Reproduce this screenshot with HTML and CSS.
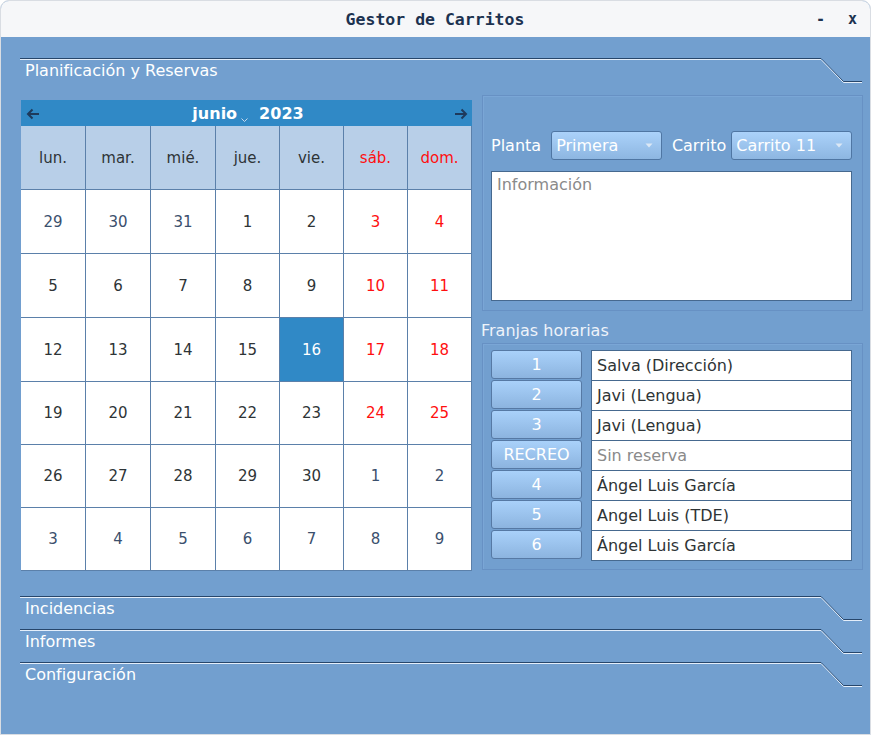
FILE: index.html
```html
<!DOCTYPE html>
<html lang="es">
<head>
<meta charset="utf-8">
<title>Gestor de Carritos</title>
<link rel="stylesheet" href="styles.css">
</head>
<body>
<div class="window">
  <div class="titlebar">
    <div class="title">Gestor de Carritos</div>
    <div class="controls"><span class="ctl">-</span><span class="ctl">x</span></div>
  </div>
  <div class="main">
    <div class="section-head first">
      <span class="head-text">Planificación y Reservas</span>
      <svg class="tail" width="42" height="26" viewBox="0 0 42 26"><path d="M0 0.5 H1 L23.5 23.5 H42" fill="none" stroke="#27466b" stroke-width="1"/><path d="M0 1.5 H1 L23.5 24.5 H42" fill="none" stroke="#e4eefa" stroke-width="1"/></svg>
    </div>

    <div class="planning">
      <div class="calendar">
        <div class="cal-head">
          <svg class="arrow" width="14" height="12" viewBox="0 0 14 12"><path d="M13 6 H2 M6.5 1.5 L2 6 L6.5 10.5" fill="none" stroke="#1e3a5c" stroke-width="2"/></svg>
          <div class="month">
            <span>junio</span>
            <svg class="mini" width="7" height="4" viewBox="0 0 7 4"><path d="M0.5 0.5 L3.5 3.5 L6.5 0.5" fill="none" stroke="#c9d9ec" stroke-width="1"/></svg>
            <span class="year">2023</span>
          </div>
          <svg class="arrow" width="14" height="12" viewBox="0 0 14 12"><path d="M1 6 H12 M7.5 1.5 L12 6 L7.5 10.5" fill="none" stroke="#1e3a5c" stroke-width="2"/></svg>
        </div>
        <div class="cal-grid">
          <div class="dn">lun.</div><div class="dn">mar.</div><div class="dn">mié.</div><div class="dn">jue.</div><div class="dn">vie.</div><div class="dn we">sáb.</div><div class="dn we">dom.</div>

          <div class="d other">29</div><div class="d other">30</div><div class="d other">31</div><div class="d">1</div><div class="d">2</div><div class="d we">3</div><div class="d we">4</div>
          <div class="d">5</div><div class="d">6</div><div class="d">7</div><div class="d">8</div><div class="d">9</div><div class="d we">10</div><div class="d we">11</div>
          <div class="d">12</div><div class="d">13</div><div class="d">14</div><div class="d">15</div><div class="d sel">16</div><div class="d we">17</div><div class="d we">18</div>
          <div class="d">19</div><div class="d">20</div><div class="d">21</div><div class="d">22</div><div class="d">23</div><div class="d we">24</div><div class="d we">25</div>
          <div class="d">26</div><div class="d">27</div><div class="d">28</div><div class="d">29</div><div class="d">30</div><div class="d other">1</div><div class="d other">2</div>
          <div class="d other">3</div><div class="d other">4</div><div class="d other">5</div><div class="d other">6</div><div class="d other">7</div><div class="d other">8</div><div class="d other">9</div>
        </div>
      </div>

      <div class="right">
        <div class="panel info-panel">
          <div class="selectors">
            <span class="lbl">Planta</span>
            <div class="combo c1"><span>Primera</span><svg width="8" height="5" viewBox="0 0 8 5"><path d="M0.5 0.5 H7.5 L4 4.5 Z" fill="#dce8f5"/></svg></div>
            <span class="lbl">Carrito</span>
            <div class="combo c2"><span>Carrito 11</span><svg width="8" height="5" viewBox="0 0 8 5"><path d="M0.5 0.5 H7.5 L4 4.5 Z" fill="#dce8f5"/></svg></div>
          </div>
          <div class="info">Información</div>
        </div>
        <div class="franjas-lbl">Franjas horarias</div>
        <div class="panel slots">
          <div class="btn">1</div><div class="field">Salva (Dirección)</div>
          <div class="btn">2</div><div class="field">Javi (Lengua)</div>
          <div class="btn">3</div><div class="field">Javi (Lengua)</div>
          <div class="btn">RECREO</div><div class="field empty">Sin reserva</div>
          <div class="btn">4</div><div class="field">Ángel Luis García</div>
          <div class="btn">5</div><div class="field">Angel Luis (TDE)</div>
          <div class="btn">6</div><div class="field">Ángel Luis García</div>
        </div>
      </div>
    </div>

    <div class="section-head">
      <span class="head-text">Incidencias</span>
      <svg class="tail" width="42" height="26" viewBox="0 0 42 26"><path d="M0 0.5 H1 L23.5 23.5 H42" fill="none" stroke="#27466b" stroke-width="1"/><path d="M0 1.5 H1 L23.5 24.5 H42" fill="none" stroke="#e4eefa" stroke-width="1"/></svg>
    </div>
    <div class="section-head">
      <span class="head-text">Informes</span>
      <svg class="tail" width="42" height="26" viewBox="0 0 42 26"><path d="M0 0.5 H1 L23.5 23.5 H42" fill="none" stroke="#27466b" stroke-width="1"/><path d="M0 1.5 H1 L23.5 24.5 H42" fill="none" stroke="#e4eefa" stroke-width="1"/></svg>
    </div>
    <div class="section-head">
      <span class="head-text">Configuración</span>
      <svg class="tail" width="42" height="26" viewBox="0 0 42 26"><path d="M0 0.5 H1 L23.5 23.5 H42" fill="none" stroke="#27466b" stroke-width="1"/><path d="M0 1.5 H1 L23.5 24.5 H42" fill="none" stroke="#e4eefa" stroke-width="1"/></svg>
    </div>
  </div>
</div>
</body>
</html>
```

FILE: styles.css
```css
* { box-sizing: border-box; }
html, body { margin: 0; padding: 0; background: #ffffff; }
body {
  font-family: "DejaVu Sans", "Noto Sans", sans-serif;
  font-size: 16px;
  color: #2e3436;
}
.window {
  width: 871px;
  height: 735px;
  border: 1px solid #d9dde3;
  border-radius: 9px 9px 0 0;
  background: #729fcf;
  display: flex;
  flex-direction: column;
  overflow: hidden;
}
.titlebar {
  height: 36px;
  flex: none;
  background: #f6f7f9;
  display: flex;
  align-items: center;
  justify-content: center;
  position: relative;
}
.title {
  font-family: "DejaVu Sans Mono", "Liberation Mono", monospace;
  font-weight: bold;
  font-size: 16.5px;
  color: #1c3250;
  padding: 1px 1px 0 0;
}
.controls {
  position: absolute;
  right: 13px;
  top: 9px;
  display: flex;
  gap: 23px;
  font-family: "DejaVu Sans Mono", monospace;
  font-weight: bold;
  font-size: 15px;
  color: #1c3250;
}
.main {
  flex: 1;
  padding: 21px 8px 0 19px;
}
.section-head {
  height: 33px;
  display: flex;
  align-items: flex-start;
}
.section-head.first { margin-bottom: 4px; }
.head-text {
  flex: 1;
  height: 26px;
  border-top: 1px solid #27466b;
  box-shadow: inset 0 1px 0 #e4eefa;
  color: #ffffff;
  font-size: 16px;
  line-height: 20px;
  padding: 2px 0 0 5px;
}
.tail { flex: none; display: block; }

.planning {
  display: flex;
  gap: 10px;
  height: 475px;
  margin-bottom: 26px;
}
.calendar {
  margin-top: 5px;
  margin-left: 1px;
  width: 451px;
  height: 471px;
  display: flex;
  flex-direction: column;
}
.cal-head {
  height: 26px;
  background: #3089c6;
  display: flex;
  align-items: center;
  justify-content: space-between;
  padding: 1px 4px 0 5px;
}
.arrow { display: block; }
.month {
  display: flex;
  align-items: center;
  color: #ffffff;
  font-weight: bold;
  font-size: 16px;
  margin-left: 2px;
}
.mini { margin: 12px 0 0 4px; display: block; }
.year { margin-left: 11px; }
.cal-grid {
  display: grid;
  grid-template-columns: repeat(3, 64px) repeat(4, 63px);
  grid-template-rows: repeat(4, 63px) repeat(3, 62px);
  gap: 1px;
  padding: 0 1px 1px 0;
  background: #5b80aa;
}
.dn, .d {
  display: flex;
  align-items: center;
  justify-content: center;
  font-size: 15px;
  color: #2e3436;
}
.dn { background: #b8cfe8; }
.d { background: #ffffff; }
.d.other { color: #3b506d; }
.we { color: #ff1010; }
.d.sel { background: #3089c6; color: #ffffff; }

.right {
  width: 381px;
  display: flex;
  flex-direction: column;
}
.panel {
  border: 1px solid #6791c4;
  box-shadow: inset 1px 1px 0 #7aa6d6;
}
.info-panel {
  height: 216px;
  padding: 35px 10px 9px 8px;
  display: flex;
  flex-direction: column;
  gap: 11px;
}
.selectors {
  display: flex;
  align-items: center;
  height: 29px;
}
.lbl { color: #ffffff; font-size: 16px; }
.combo {
  height: 29px;
  border: 1px solid #4f76a3;
  border-radius: 3px;
  background: linear-gradient(#abd2fa, #8db6e1);
  color: #ffffff;
  display: flex;
  align-items: center;
  justify-content: space-between;
  padding: 0 8px 0 4px;
  font-size: 16px;
}
.combo svg { display: block; }
.c1 { width: 111px; margin-left: 10px; margin-right: 10px; }
.c2 { width: 121px; margin-left: 5px; }
.info {
  height: 131px;
  background: #ffffff;
  border: 1px solid #46698f;
  color: #8a8a8a;
  padding: 3px 5px;
  font-size: 16px;
  line-height: 20px;
}
.franjas-lbl {
  color: #eef3fa;
  font-size: 16px;
  line-height: 20px;
  margin: 10px 0 2px -1px;
}
.slots {
  height: 228px;
  padding: 6px 10px 0 8px;
  display: grid;
  grid-template-columns: 91px 261px;
  grid-auto-rows: 30px;
  column-gap: 9px;
}
.btn {
  height: 29px;
  border: 1px solid #5679a4;
  border-radius: 3px;
  background: linear-gradient(#a9d1fa, #8cb4df);
  color: #ffffff;
  font-size: 16px;
  display: flex;
  align-items: center;
  justify-content: center;
}
.field {
  height: 31px;
  background: #ffffff;
  border: 1px solid #46698f;
  font-size: 16px;
  display: flex;
  align-items: center;
  padding: 0 5px 1px;
  color: #2e3436;
}
.field.empty { color: #8a8a8a; }
```
